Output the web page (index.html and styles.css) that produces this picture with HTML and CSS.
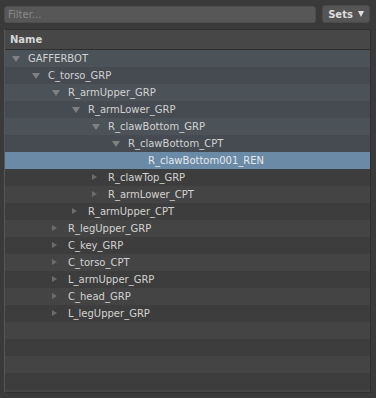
FILE: index.html
```html
<!DOCTYPE html>
<html lang="en">
<head>
    <meta charset="UTF-8">
    <title>Outliner</title>
    <link rel="stylesheet" href="styles.css">
</head>
<body>
    <div class="toolbar">
        <input class="filter" type="text" placeholder="Filter...">
        <div class="sets-button">Sets <span class="sets-arrow"></span></div>
    </div>

    <div class="panel">
        <div class="header">Name</div>
        <div class="rows">
            <div class="row path d0"><span class="arrow open"></span>GAFFERBOT</div>
            <div class="row path d1"><span class="arrow open"></span>C_torso_GRP</div>
            <div class="row path d2"><span class="arrow open"></span>R_armUpper_GRP</div>
            <div class="row path d3"><span class="arrow open"></span>R_armLower_GRP</div>
            <div class="row path d4"><span class="arrow open"></span>R_clawBottom_GRP</div>
            <div class="row path d5"><span class="arrow open"></span>R_clawBottom_CPT</div>
            <div class="row selected d6"><span class="arrow"></span>R_clawBottom001_REN</div>
            <div class="row d4"><span class="arrow closed"></span>R_clawTop_GRP</div>
            <div class="row d4"><span class="arrow closed"></span>R_armLower_CPT</div>
            <div class="row d3"><span class="arrow closed"></span>R_armUpper_CPT</div>
            <div class="row d2"><span class="arrow closed"></span>R_legUpper_GRP</div>
            <div class="row d2"><span class="arrow closed"></span>C_key_GRP</div>
            <div class="row d2"><span class="arrow closed"></span>C_torso_CPT</div>
            <div class="row d2"><span class="arrow closed"></span>L_armUpper_GRP</div>
            <div class="row d2"><span class="arrow closed"></span>C_head_GRP</div>
            <div class="row d2"><span class="arrow closed"></span>L_legUpper_GRP</div>
            <div class="row"></div>
            <div class="row"></div>
            <div class="row"></div>
            <div class="row"></div>
            <div class="row"></div>
        </div>
    </div>
</body>
</html>
```

FILE: styles.css
```css
body {
    margin: 0;
    background-color: #3a3a3a;
    font-family: "DejaVu Sans", sans-serif;
    font-size: 10px;
    color: #d2d2d2;
    height: 398px;
    overflow: hidden;
}

.toolbar {
    display: flex;
    align-items: center;
    gap: 6px;
    padding: 5px 6px 0 4px;
}

.filter {
    flex: 1;
    height: 17px;
    box-sizing: border-box;
    margin: 0;
    padding: 0 3px;
    border: 1px solid #4e4e4e;
    border-radius: 3px;
    background-color: #575757;
    color: #d2d2d2;
    font-family: "DejaVu Sans", sans-serif;
    font-size: 10px;
    outline: none;
}

.filter::placeholder {
    color: #8a8a8a;
}

.sets-button {
    width: 48px;
    height: 18px;
    box-sizing: border-box;
    display: flex;
    align-items: center;
    justify-content: center;
    gap: 5px;
    border: 1px solid #4a4a4a;
    border-radius: 3px;
    background-color: #555555;
    font-weight: bold;
    color: #dcdcdc;
}

.sets-arrow {
    width: 0;
    height: 0;
    border-left: 3.5px solid transparent;
    border-right: 3.5px solid transparent;
    border-top: 6px solid #e0e0e0;
}

.panel {
    margin: 6px 5px 0 4px;
    height: 364px;
    box-sizing: border-box;
    border: 1px solid #2f2f2f;
    border-left-color: #575757;
    overflow: hidden;
}

.header {
    height: 19px;
    border-bottom: 1px solid #2e2e2e;
    background-color: #474747;
    padding-left: 5px;
    display: flex;
    align-items: center;
    font-weight: bold;
    color: #d6d6d6;
}

.row {
    height: 17px;
    display: flex;
    align-items: center;
    white-space: nowrap;
    background-color: #3d3d3d;
}

.row:nth-child(odd) {
    background-color: #444444;
}

.row.path {
    background-color: #454b51;
}

.row.path:nth-child(odd) {
    background-color: #4b5258;
}

.row.selected {
    background-color: #6a8aa6;
    color: #e4e8ec;
}

.arrow {
    width: 16px;
    height: 17px;
    flex-shrink: 0;
    position: relative;
}

.arrow.open::before {
    content: "";
    position: absolute;
    left: 0;
    top: 6px;
    border-left: 4px solid transparent;
    border-right: 4px solid transparent;
    border-top: 6px solid #808080;
}

.arrow.closed::before {
    content: "";
    position: absolute;
    left: 0;
    top: 5px;
    border-top: 3.5px solid transparent;
    border-bottom: 3.5px solid transparent;
    border-left: 5px solid #6c6c6c;
}

.d0 { padding-left: 7px; }
.d1 { padding-left: 27px; }
.d2 { padding-left: 47px; }
.d3 { padding-left: 67px; }
.d4 { padding-left: 87px; }
.d5 { padding-left: 107px; }
.d6 { padding-left: 127px; }
```
